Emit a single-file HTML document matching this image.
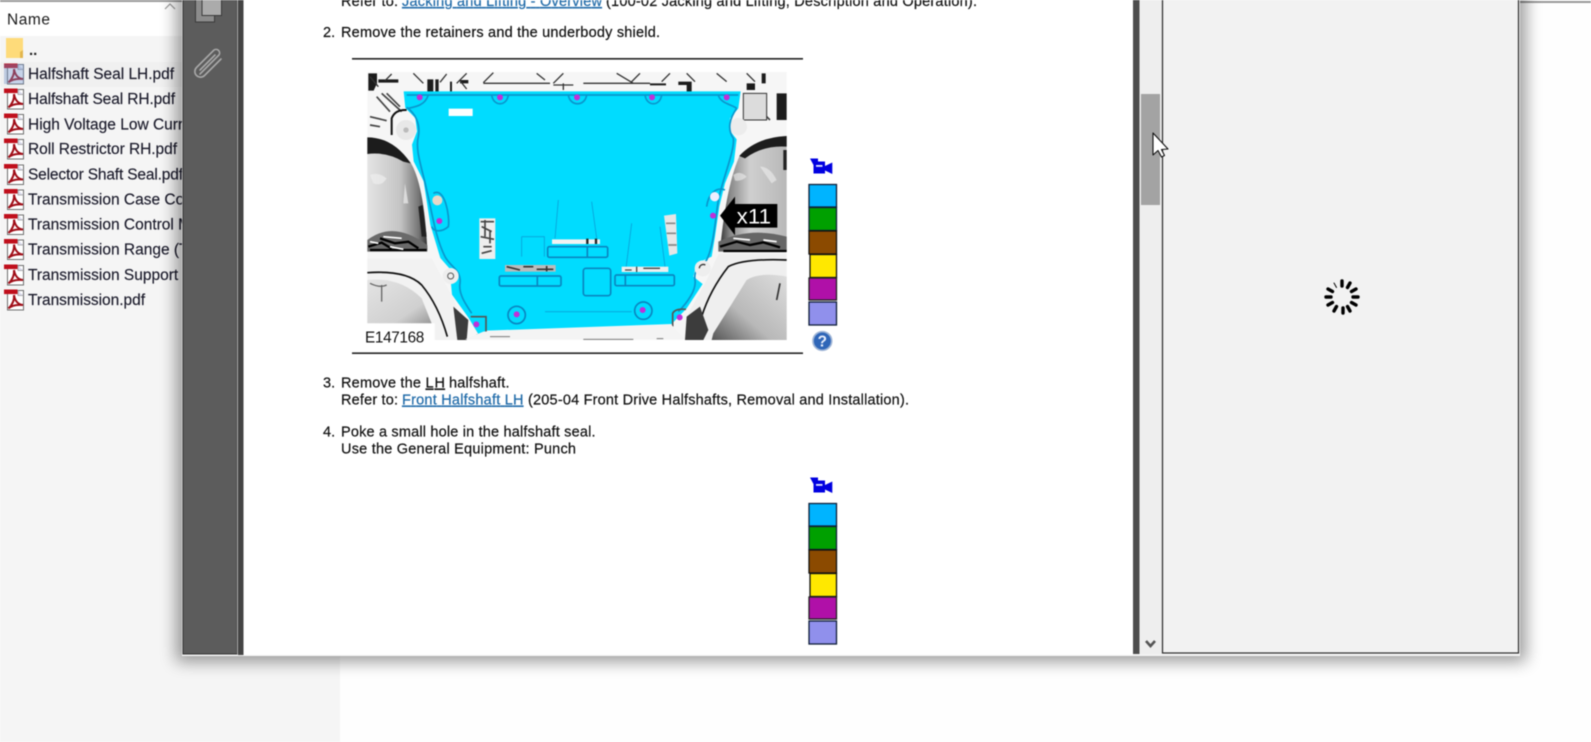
<!DOCTYPE html>
<html><head><meta charset="utf-8"><style>
html,body{margin:0;padding:0;background:#fefefe;width:1591px;height:742px;overflow:hidden}
svg{position:absolute;left:0;top:0;display:block;filter:blur(.45px)}
text{font-family:"Liberation Sans",sans-serif}
</style></head><body>
<svg width="1591" height="742" viewBox="0 0 1591 742" xmlns="http://www.w3.org/2000/svg">
<defs>
<filter id="sh" x="-5%" y="-5%" width="110%" height="110%"><feGaussianBlur stdDeviation="8"/></filter>
<filter id="b2" x="-10%" y="-10%" width="120%" height="120%"><feGaussianBlur stdDeviation="5"/></filter>
<linearGradient id="lg" x1="0" y1="0" x2="1" y2="0"><stop offset="0" stop-color="#e4e4e4"/><stop offset=".55" stop-color="#c4c4c4"/><stop offset=".85" stop-color="#777"/><stop offset="1" stop-color="#333"/></linearGradient>
<linearGradient id="rg" x1="1" y1="0" x2="0" y2="0"><stop offset="0" stop-color="#b8b8b8"/><stop offset=".55" stop-color="#cfcfcf"/><stop offset=".85" stop-color="#888"/><stop offset="1" stop-color="#333"/></linearGradient>
<linearGradient id="lo" x1="0" y1="0" x2="1" y2="1"><stop offset="0" stop-color="#e4e4e4"/><stop offset=".7" stop-color="#d0d0d0"/><stop offset="1" stop-color="#999"/></linearGradient>
<linearGradient id="ro" x1="1" y1="0" x2="0" y2="1"><stop offset="0" stop-color="#ddd"/><stop offset=".6" stop-color="#b8b8b8"/><stop offset="1" stop-color="#555"/></linearGradient>
<g id="pdf">
<rect x="7.5" y="-9.5" width="16" height="19.5" fill="#fff" stroke="#6e6e6e"/>
<path d="M18 -9.5v5h5.5" fill="#dde" stroke="#999" stroke-width=".8"/>
<rect x="4" y="-10.5" width="13.5" height="4.6" fill="#c00f1c"/>
<path d="M8.5 8.5C12 5 14.5 0 14 -5C15 1 18 4.5 23 5C18 4.5 12 5 8.5 8.5Z" fill="none" stroke="#a00e18" stroke-width="2"/>
</g>
<g id="legend">
<rect x="809" y="184.5" width="27.5" height="22.5" fill="#00b4ff" stroke="#10203a" stroke-width="1.3"/>
<rect x="809" y="207.5" width="27.5" height="23" fill="#00a000" stroke="#10203a" stroke-width="1.3"/>
<rect x="809" y="231" width="27.5" height="23" fill="#8b4a00" stroke="#111" stroke-width="1.3"/>
<rect x="810" y="254.5" width="26.5" height="23" fill="#ffe800" stroke="#111" stroke-width="1.3"/>
<rect x="809" y="278" width="27.5" height="22" fill="#b010a8" stroke="#222" stroke-width="1.3"/>
<rect x="809" y="302" width="27.5" height="23" fill="#9090ec" stroke="#10203a" stroke-width="1.3"/>
<path d="M810 158.5H818V161.5H825V166L832.3 162.5V174L825 170.5V173.5H813.5V165Z" fill="#0000e0"/>
<rect x="816" y="165" width="6.5" height="1.8" fill="#dfe4ff"/>
</g>
</defs>

<!-- desktop / file panel -->
<rect width="1591" height="742" fill="#fefefe"/>
<rect x="0" y="36" width="340" height="706" fill="#f5f5f5"/>
<rect x="0" y="0" width="340" height="36" fill="#fff"/>
<rect x="0" y="62" width="182" height="25" fill="#f0f0f0"/>
<rect x="0" y="0" width="183" height="2" fill="#9a9a9a"/>
<rect x="1519" y="1" width="72" height="2" fill="#9a9a9a"/>
<text x="7" y="24.5" font-size="15.5" textLength="43" lengthAdjust="spacing" fill="#1a1a1a">Name</text>
<path d="M165 9l5-5 5 5" fill="none" stroke="#999" stroke-width="1.2"/>
<path d="M6 38h17v20H6z" fill="#fedb7a"/><path d="M20 58v-6l3-2v8z" fill="#e3b64e"/>
<text x="29" y="55" font-size="15" font-weight="bold" fill="#1a1a1a">..</text>

<use href="#pdf" y="74"/><use href="#pdf" y="99"/><use href="#pdf" y="124"/><use href="#pdf" y="149"/><use href="#pdf" y="174.5"/><use href="#pdf" y="199.5"/><use href="#pdf" y="224.5"/><use href="#pdf" y="249.5"/><use href="#pdf" y="275"/><use href="#pdf" y="300"/>
<rect x="4" y="64" width="20" height="20" fill="#7090c8" opacity=".4"/>
<g font-size="15.5" fill="#1a1a2a" stroke="#1a1a2a" stroke-width=".15">
<text x="28" y="79" textLength="146" lengthAdjust="spacing">Halfshaft Seal LH.pdf</text>
<text x="28" y="104" textLength="147" lengthAdjust="spacing">Halfshaft Seal RH.pdf</text>
<text x="28" y="129.5">High Voltage Low Current.pdf</text>
<text x="28" y="154" textLength="149" lengthAdjust="spacing">Roll Restrictor RH.pdf</text>
<text x="28" y="179.5" textLength="155" lengthAdjust="spacing">Selector Shaft Seal.pdf</text>
<text x="28" y="204.5">Transmission Case Cover.pdf</text>
<text x="28" y="229.5">Transmission Control Module.pdf</text>
<text x="28" y="254.5">Transmission Range (TR).pdf</text>
<text x="28" y="280">Transmission Support Insulator.pdf</text>
<text x="28" y="305" textLength="117" lengthAdjust="spacing">Transmission.pdf</text>
</g>

<!-- window shadow -->
<rect x="176" y="-20" width="1350" height="682" fill="#000" opacity=".38" filter="url(#sh)"/>
<!-- window -->
<rect x="182" y="-5" width="1338" height="661" fill="#f4f4f4"/>
<rect x="183" y="-5" width="54" height="659" fill="#5c5c5c" stroke="#333" stroke-width="1"/>
<rect x="237" y="-5" width="1.2" height="659" fill="#b0b0b0"/>
<rect x="238" y="-5" width="5.5" height="660" fill="#444"/>
<rect x="243.5" y="-5" width="889.5" height="660" fill="#fff"/>
<rect x="1133" y="-5" width="6.5" height="659" fill="#4d4d4d"/>
<rect x="1139.5" y="-5" width="23" height="659" fill="#eee"/>
<rect x="1141" y="94" width="19" height="111" fill="#a3a3a3"/>
<path d="M1146 641l4.5 5 4.5-5" fill="none" stroke="#555" stroke-width="2.6"/>
<rect x="1162.5" y="-5" width="356" height="658" fill="#f2f2f2" stroke="#2a2a2a" stroke-width="1.2"/>

<!-- sidebar icons -->
<rect x="195.5" y="-8" width="19" height="30" fill="#8c8c8c" stroke="#3a3a3a"/>
<rect x="202" y="-8" width="19.5" height="23.5" fill="#ababab" stroke="#3a3a3a"/>
<path d="M199 73L218 54a3.6 3.6 0 0 0-5-5L195.5 66.5a5.5 5.5 0 0 0 8 8L220 58M199 69L214 54" transform="translate(1 1)" fill="none" stroke="#a8a8a8" stroke-width="1.6" stroke-linecap="round"/>

<!-- doc text -->
<g font-size="14.5" fill="#111" stroke="#111" stroke-width=".2">
<text x="341" y="6" textLength="57" lengthAdjust="spacing">Refer to:</text>
<text x="402" y="6" textLength="200" lengthAdjust="spacing" fill="#1f6aa8" stroke="#1f6aa8" text-decoration="underline">Jacking and Lifting - Overview</text>
<text x="606" y="6" textLength="371" lengthAdjust="spacing">(100-02 Jacking and Lifting, Description and Operation).</text>
<text x="323" y="37">2.</text>
<text x="341" y="37" textLength="319" lengthAdjust="spacing">Remove the retainers and the underbody shield.</text>
<text x="323" y="387.5">3.</text>
<text x="341" y="387.5" textLength="80" lengthAdjust="spacing">Remove the</text>
<text x="425.5" y="387.5" textLength="19.5" lengthAdjust="spacing" text-decoration="underline">LH</text>
<text x="449" y="387.5" textLength="60.5" lengthAdjust="spacing">halfshaft.</text>
<text x="341" y="404.5" textLength="57" lengthAdjust="spacing">Refer to:</text>
<text x="402" y="404.5" textLength="121.5" lengthAdjust="spacing" fill="#1f6aa8" stroke="#1f6aa8" text-decoration="underline">Front Halfshaft LH</text>
<text x="528" y="404.5" textLength="381" lengthAdjust="spacing">(205-04 Front Drive Halfshafts, Removal and Installation).</text>
<text x="323" y="436.5">4.</text>
<text x="341" y="436.5" textLength="254.5" lengthAdjust="spacing">Poke a small hole in the halfshaft seal.</text>
<text x="341" y="453.5" textLength="235" lengthAdjust="spacing">Use the General Equipment: Punch</text>
</g>

<!-- rules -->
<rect x="352" y="58" width="451" height="1.6" fill="#222"/>
<rect x="352" y="352.4" width="451" height="1.6" fill="#222"/>

<!-- illustration (zoom coordinates) -->
<g transform="translate(350,50) scale(.33333)">
<rect x="52" y="66" width="1258" height="804" fill="#f6f6f6"/>
<!-- left lobe -->
<path d="M52 262Q125 262 180 335Q222 400 232 600H52Z" fill="url(#lg)"/>
<path d="M52 262Q130 262 182 340L160 335Q110 305 52 312Z" fill="#1c1c1c"/>
<path d="M60 375Q85 365 110 385Q95 410 70 400ZM165 400l10 60l-15 0Z" fill="#eee" opacity=".7"/>
<path d="M205 470l10 90l15 0l-12-95Z" fill="#222"/>
<path d="M52 570Q130 510 232 585V605H52Z" fill="#6a6a6a"/>
<path d="M55 590l40-12l30 18M90 565l45 15l40-5l30 20M60 600h170" fill="none" stroke="#000" stroke-width="7"/>
<path d="M100 560l55 5M120 590l40 8M60 575l25 5" fill="none" stroke="#fff" stroke-width="5"/>
<!-- lower left -->
<path d="M52 625H245L280 690L310 745L355 870H255V820H52Z" fill="#f2f2f2"/>
<path d="M52 690Q150 680 215 745L245 820H52Z" fill="url(#lo)"/>
<path d="M52 668Q170 660 215 705Q265 765 292 860" fill="none" stroke="#111" stroke-width="5"/>
<path d="M310 770L355 810L350 870H322Z" fill="#3c3c3c"/>
<path d="M60 700q30 15 50 5M95 705v50" fill="none" stroke="#666" stroke-width="4"/>
<!-- right lobe -->
<path d="M1310 258Q1220 262 1170 315Q1130 400 1110 600H1310Z" fill="url(#rg)"/>
<path d="M1310 258Q1220 262 1168 318L1185 325Q1240 285 1310 290Z" fill="#1c1c1c"/>
<path d="M1150 375Q1170 360 1190 380Q1175 395 1155 392ZM1230 350q30 0 50 40l-15 10Z" fill="#eee" opacity=".6"/>
<path d="M1300 300h10v60h-10z" fill="#222"/>
<path d="M1105 575Q1200 530 1310 560V605H1105Z" fill="#666"/>
<path d="M1110 590l50-15l40 10l40-8l50 15M1120 603h190" fill="none" stroke="#000" stroke-width="7"/>
<path d="M1150 565l50 5M1240 570l40 5" fill="none" stroke="#fff" stroke-width="5"/>
<!-- lower right -->
<path d="M1310 612H1105L1070 690L1015 790L1005 870H1310Z" fill="#efefef"/>
<path d="M1310 680Q1230 665 1190 690L1090 850L1085 870H1310Z" fill="url(#ro)"/>
<path d="M1310 630Q1180 625 1135 650Q1080 720 1055 800" fill="none" stroke="#111" stroke-width="5"/>
<path d="M1010 800L1050 770L1075 840L1060 870H1005Z" fill="#3c3c3c"/>
<path d="M1290 700l-10 50" stroke="#333" stroke-width="5" fill="none"/>
<!-- top strip -->
<path d="M55 70h26v30l-10 22h-16zM85 88h60v10h-60zM232 88h18v38h-18zM256 88h10v38h-10zM300 95h6v30h-6zM330 90h25v10h-25zM900 100h48v6h-48zM985 95h40v30h-15v-20h-25zM1190 100h25v20h-25zM1235 70h12v30h-12zM1280 130h30v80h-30z" fill="#1c1c1c"/>
<path d="M60 80l25 30M125 72l-20 20M190 70l30 30M290 72l-20 25M350 70l-30 30M430 68l-30 30M560 70l25 20M640 70l-30 30M800 70l50 30M870 70l-25 25M960 70l-25 25M1010 70l25 25M1100 70l30 25M1190 70l25 25M330 92l20 25M610 105h60M640 100v20M700 100h200M400 100h200" fill="none" stroke="#333" stroke-width="4"/>
<path d="M95 130l60 55M110 130l40 40M80 140l40 45M60 200l50 12M60 225l30 5M1180 150l70 10M1220 170l40 40" fill="none" stroke="#444" stroke-width="5"/>
<path d="M1180 130h70v80h-70z" fill="#dcdcdc" stroke="#333" stroke-width="3"/>
<path d="M125 255V205Q135 178 170 180" fill="none" stroke="#111" stroke-width="6"/>
<circle cx="168" cy="240" r="30" fill="#e8e8e8"/>
<circle cx="168" cy="240" r="8" fill="#bbb"/>
<circle cx="1165" cy="230" r="26" fill="#ececec"/>

<!-- cyan shield -->
<path d="M161 124L1172 124L1165 175L1140 205L1138 240L1160 268L1152 335L1125 400L1108 470L1095 560L1085 620L1040 640L1030 680L1058 702L1010 775L965 822L410 842L386 854L356 804L306 734L302 690L320 680L271 624L241 524L221 394L191 334L186 284L201 244L196 204L166 174Z" fill="#00dcff"/>
<g fill="none" stroke="#0a96cc" stroke-width="5">
<path d="M170 135H1165M170 172C195 190 212 220 205 260C195 300 215 350 230 420C245 480 255 560 285 620C300 650 335 660 330 700C325 730 345 760 365 790"/>
<path d="M1160 175C1140 205 1130 235 1150 265C1155 300 1120 380 1105 450C1095 520 1090 590 1070 630C1050 650 1030 660 1035 690C1040 720 1010 760 985 785"/>
<path d="M425 135C430 170 470 170 475 135M655 135C660 170 705 170 710 135M885 135C890 170 930 170 935 135M1105 135C1110 160 1150 165 1160 175M175 175C200 170 225 165 235 135"/>
<path d="M250 430C285 410 300 500 295 530C275 548 250 545 245 530M1070 470C1075 430 1100 410 1125 420"/>
</g>
<g fill="none" stroke="#0a86c0" stroke-width="5">
<rect x="448" y="678" width="185" height="30" rx="5"/><path d="M562 678v30"/>
<rect x="795" y="675" width="178" height="32" rx="5"/><path d="M826 675v32"/>
<rect x="593" y="590" width="180" height="32" rx="5"/><path d="M712 590v32"/>
<rect x="700" y="655" width="82" height="82" rx="8"/>
<circle cx="500" cy="795" r="26"/><circle cx="880" cy="782" r="26"/>
</g>
<path d="M362 800H408V855H380M968 830V790Q975 775 1008 778" fill="none" stroke="#555" stroke-width="5"/>
<path d="M400 845L965 825L1005 868H345Z" fill="#f4f4f4"/>
<path d="M700 868h150M920 866h20M420 860h60" stroke="#777" stroke-width="3" fill="none"/>
<path d="M625 450L615 565M725 455L740 565M845 520L828 655M930 530L945 650M585 785H845M515 560H583V620M515 560V620" fill="none" stroke="#0aa0d8" stroke-width="2.5"/>
<rect x="296" y="176" width="72" height="22" fill="#fff"/>
<rect x="388" y="505" width="48" height="122" fill="#eee"/>
<path d="M392 515h40M395 530l30 15M392 560l40 8M405 510v50M400 590h25M395 610l30-8M420 540v40" stroke="#444" stroke-width="5" fill="none"/>
<path d="M942 497L978 492L982 610L958 617Z" fill="#e6e6e6"/><path d="M948 520h28M950 550h28M955 585h25" stroke="#888" stroke-width="5"/>
<path d="M606 568H750V582H606Z" fill="#f2f2f2"/><path d="M712 566v16M738 566v16" stroke="#222" stroke-width="7"/>
<rect x="465" y="645" width="152" height="20" fill="#bbb"/><path d="M470 650l40 10M520 650h30M560 658h50M590 648v16" stroke="#333" stroke-width="5"/>
<rect x="815" y="650" width="140" height="16" fill="#eee"/><path d="M860 650v16M880 655h50M825 660h20" stroke="#444" stroke-width="4"/>
<circle cx="262" cy="451" r="15" fill="#e8d8c8"/><circle cx="1094" cy="440" r="14" fill="#eef"/>
<circle cx="302" cy="678" r="24" fill="#eee"/><circle cx="1058" cy="655" r="24" fill="#eee"/>
<circle cx="302" cy="678" r="9" fill="none" stroke="#555" stroke-width="3"/>
<path d="M1048 655a12 12 0 0 1 18-10" stroke="#333" stroke-width="4" fill="none"/>
<g fill="#c030d8">
<circle cx="209" cy="142" r="9"/><circle cx="450" cy="142" r="9"/><circle cx="681" cy="142" r="9"/><circle cx="906" cy="142" r="9"/><circle cx="1130" cy="142" r="9"/>
<circle cx="268" cy="513" r="9"/><circle cx="1089" cy="497" r="9"/><circle cx="500" cy="793" r="9"/><circle cx="878" cy="780" r="9"/><circle cx="379" cy="823" r="9"/><circle cx="989" cy="802" r="9"/>
</g>
<!-- x11 arrow -->
<path d="M1110 497L1155 440V462H1282V533H1155V556Z" fill="#000"/>
<text x="1160" y="520" font-size="64" fill="#fff" textLength="103" lengthAdjust="spacingAndGlyphs">x11</text>
<!-- label -->
<rect x="30" y="820" width="224" height="58" fill="#fff"/>
<text x="45" y="877" font-size="46" fill="#111" textLength="178" lengthAdjust="spacing">E147168</text>
<!-- help -->
<circle cx="1417" cy="873" r="28" fill="#2f66b8" stroke="#9fb5d6" stroke-width="5"/>
<text x="1417" y="890" font-size="46" font-weight="bold" text-anchor="middle" fill="#e8eefc">?</text>
</g>

<!-- legends -->
<use href="#legend"/>
<use href="#legend" y="319"/>

<!-- spinner -->
<g transform="translate(1342,297)" stroke="#000" stroke-width="3.4" stroke-linecap="round">
<path d="M0-16V-11"/><path d="M8-14L5.5-9.5"/><path d="M14-8L9.5-5.5"/><path d="M16 0H11"/><path d="M14 8L9.5 5.5"/><path d="M8 14L5.5 9.5"/><path d="M1 16V11"/><path d="M-8 14L-5.5 9.5"/><path d="M-14 8L-9.5 5.5"/><path d="M-16 0H-11"/><path d="M-14-8L-9.5-5.5"/><path d="M-8-14L-5.5-9.5" stroke-width="1"/>
</g>

<!-- cursor -->
<path d="M1153 133V155L1158 150.5L1161.5 157L1164.5 155.5L1161.5 149.5L1168 149Z" fill="#fff" stroke="#111" stroke-width="1.1" stroke-linejoin="round"/>
</svg>
</body></html>
